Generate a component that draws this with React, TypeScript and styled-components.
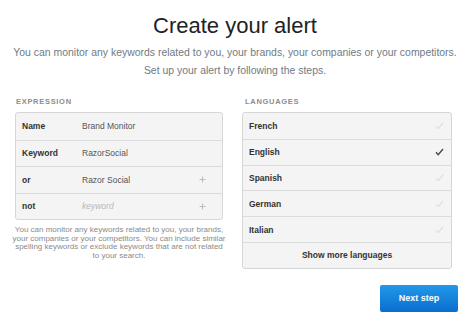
import React from "react";
import styled, { createGlobalStyle } from "styled-components";

const GlobalStyle = createGlobalStyle`
  *, *::before, *::after {
    box-sizing: border-box;
  }
  body {
    margin: 0;
    background: #ffffff;
    font-family: "Liberation Sans", Arial, sans-serif;
  }
`;

const Page = styled.div`
  width: 470px;
  height: 323px;
  overflow: hidden;
  display: flex;
  flex-direction: column;
`;

const Title = styled.h1`
  margin: 13px 0 0;
  font-size: 22px;
  line-height: 26px;
  font-weight: 400;
  color: #222;
  text-align: center;
`;

const Lead = styled.p`
  margin: 5px 0 0;
  font-size: 10.45px;
  line-height: 18px;
  color: #6f7b85;
  text-align: center;
  white-space: nowrap;
`;

const Columns = styled.div`
  display: grid;
  grid-template-columns: 208px 210px;
  column-gap: 19px;
  padding-left: 15px;
  margin-top: 17px;
`;

const Column = styled.div`
  display: flex;
  flex-direction: column;
`;

const SectionLabel = styled.div`
  font-size: 7.5px;
  line-height: 10px;
  font-weight: 700;
  letter-spacing: 0.7px;
  color: #8d8d8d;
  padding-left: ${(p: { $indent?: number }) => p.$indent ?? 1}px;
  margin-bottom: 5px;
`;

const Panel = styled.div`
  background: #f4f4f4;
  border: 1px solid #d6d6d6;
  border-radius: 3px;
  display: flex;
  flex-direction: column;
`;

const Row = styled.div<{ $h: number }>`
  height: ${(p) => p.$h}px;
  display: flex;
  align-items: center;
  padding: 0 6px;
  font-size: 8.5px;
  border-top: 1px solid #dcdcdc;
  &:first-child {
    border-top: none;
  }
`;

const RowLabel = styled.span`
  width: 60px;
  font-weight: 700;
  color: #333;
`;

const RowValue = styled.span<{ $placeholder?: boolean }>`
  flex: 1;
  color: ${(p) => (p.$placeholder ? "#b8b8b8" : "#555")};
  font-style: ${(p) => (p.$placeholder ? "italic" : "normal")};
`;

const Lang = styled.span`
  flex: 1;
  font-weight: 700;
  color: #333;
`;

const MoreRow = styled(Row)`
  justify-content: center;
  font-weight: 700;
  color: #333;
`;

const IconSlot = styled.span`
  width: 12px;
  display: flex;
  justify-content: center;
  margin-right: ${(p: { $right: number }) => p.$right}px;
`;

const Help = styled.p`
  margin: 6px -4px 0;
  font-size: 8px;
  line-height: 8.7px;
  color: #8a8a8a;
  text-align: center;
`;

const Footer = styled.div`
  display: flex;
  justify-content: flex-end;
  padding-right: 12px;
  margin-top: 16px;
`;

const NextButton = styled.button`
  width: 78px;
  height: 27px;
  border: none;
  border-radius: 2px;
  background: linear-gradient(#2299e8, #0a6dcf);
  color: #fff;
  font-family: "Liberation Sans", Arial, sans-serif;
  font-size: 9px;
  font-weight: 700;
  cursor: pointer;
`;

const Plus = () => (
  <svg width="7" height="7" viewBox="0 0 7 7">
    <path d="M3.5 0.5v6M0.5 3.5h6" stroke="#bdbdbd" strokeWidth="1.1" />
  </svg>
);

const Check = ({ on }: { on: boolean }) => (
  <svg width="9" height="8" viewBox="0 0 9 8">
    <path
      d="M1 4.3l2.2 2.4L8 1"
      fill="none"
      stroke={on ? "#444" : "#d4d4d4"}
      strokeWidth={on ? 1.3 : 1}
    />
  </svg>
);

const expression = [
  { label: "Name", value: "Brand Monitor" },
  { label: "Keyword", value: "RazorSocial" },
  { label: "or", value: "Razor Social", plus: true },
  { label: "not", value: "keyword", plus: true, placeholder: true },
];

const languages = [
  { name: "French", on: false },
  { name: "English", on: true },
  { name: "Spanish", on: false },
  { name: "German", on: false },
  { name: "Italian", on: false },
];

export default function App() {
  return (
    <Page>
      <GlobalStyle />
      <Title>Create your alert</Title>
      <Lead>
        You can monitor any keywords related to you, your brands, your companies or your competitors.
        <br />
        Set up your alert by following the steps.
      </Lead>
      <Columns>
        <Column>
          <SectionLabel>EXPRESSION</SectionLabel>
          <Panel>
            {expression.map((r) => (
              <Row key={r.label} $h={26.5}>
                <RowLabel>{r.label}</RowLabel>
                <RowValue $placeholder={r.placeholder}>{r.value}</RowValue>
                {r.plus && (
                  <IconSlot $right={8}>
                    <Plus />
                  </IconSlot>
                )}
              </Row>
            ))}
          </Panel>
          <Help>
            You can monitor any keywords related to you, your brands, your companies or your
            competitors. You can include similar spelling keywords or exclude keywords that are
            not related to your search.
          </Help>
        </Column>
        <Column>
          <SectionLabel $indent={3}>LANGUAGES</SectionLabel>
          <Panel>
            {languages.map((l) => (
              <Row key={l.name} $h={25.8}>
                <Lang>{l.name}</Lang>
                <IconSlot $right={0}>
                  <Check on={l.on} />
                </IconSlot>
              </Row>
            ))}
            <MoreRow $h={25.8}>Show more languages</MoreRow>
          </Panel>
        </Column>
      </Columns>
      <Footer>
        <NextButton>Next step</NextButton>
      </Footer>
    </Page>
  );
}
